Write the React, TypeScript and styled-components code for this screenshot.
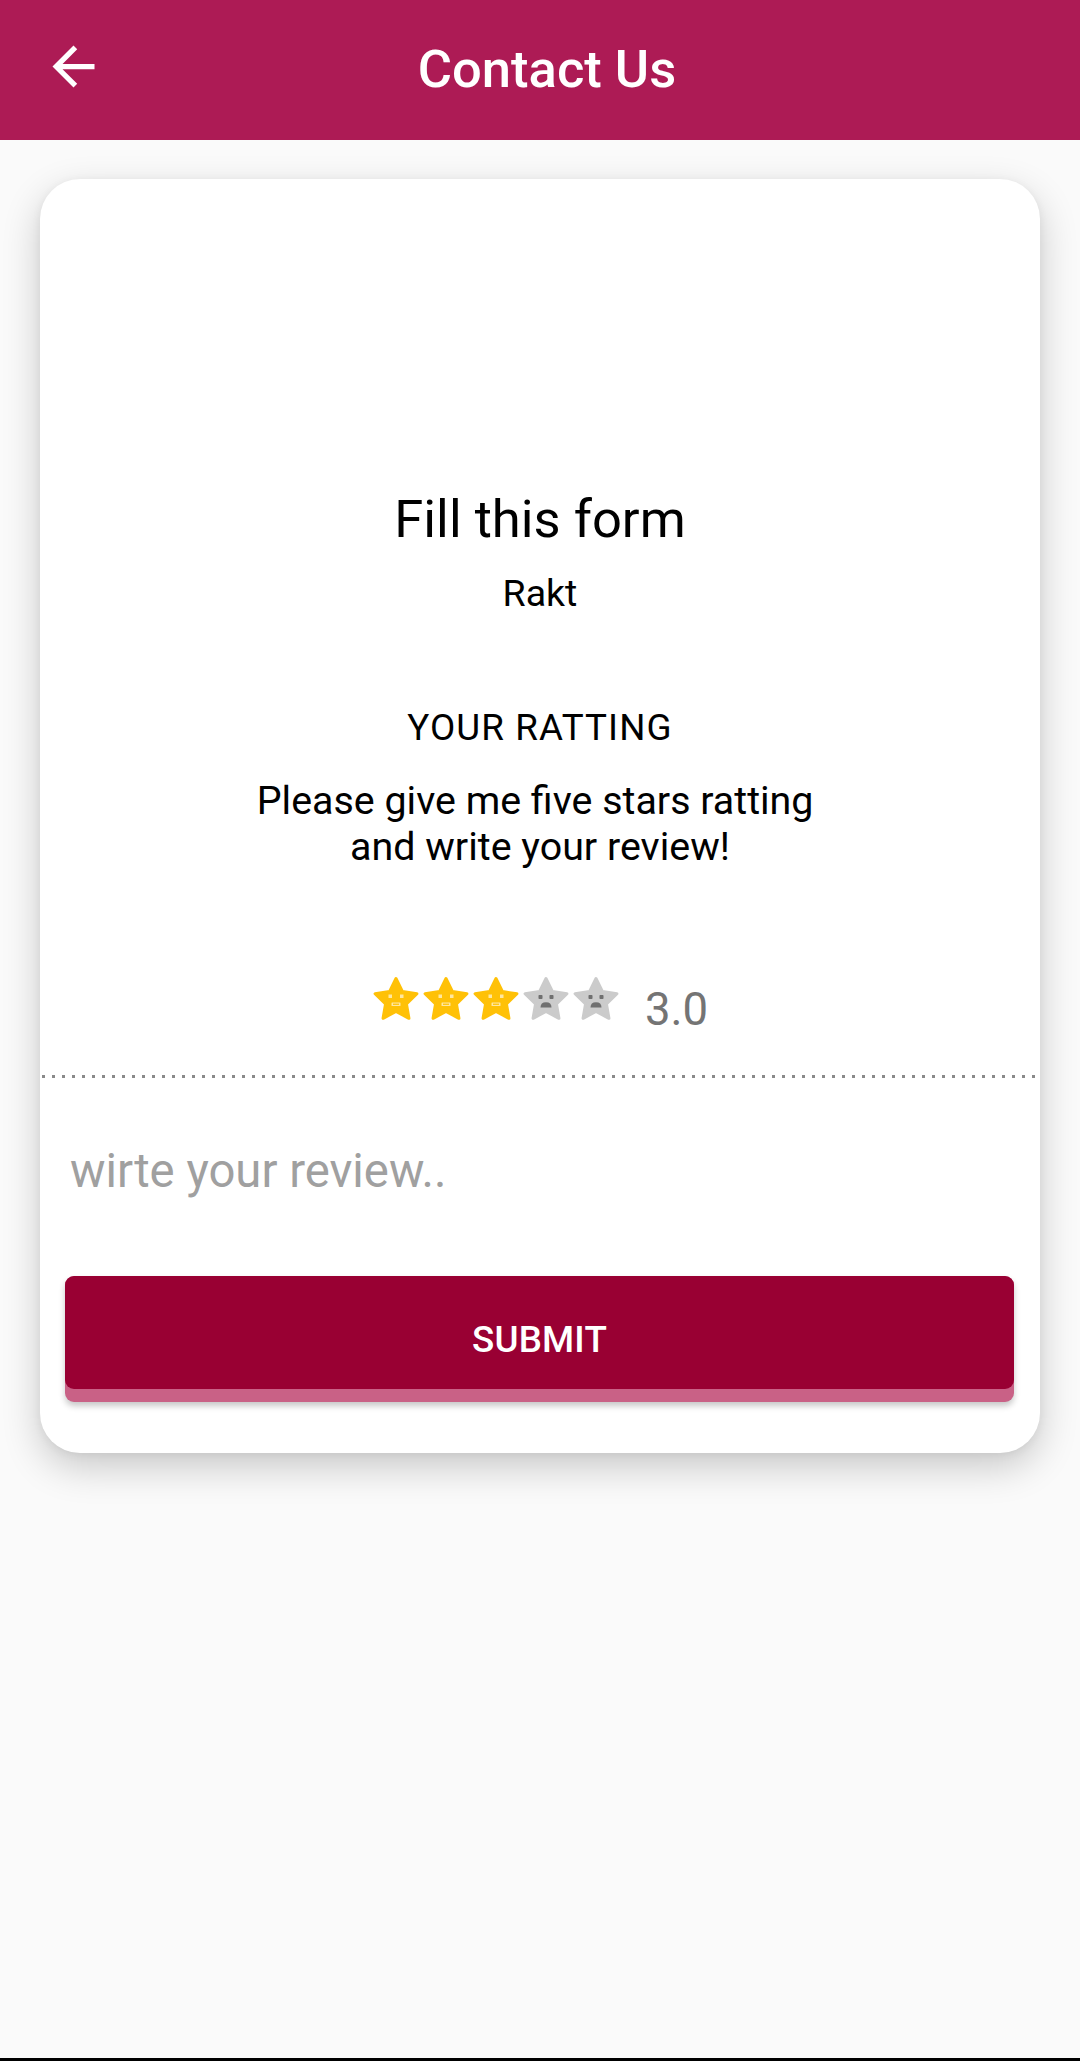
import React from "react";
import styled, { createGlobalStyle } from "styled-components";

const GlobalStyle = createGlobalStyle`
  html, body {
    margin: 0;
    padding: 0;
    background: #fafafa;
  }
  body {
    font-family: Roboto, "Noto Sans", "Liberation Sans", sans-serif;
    -webkit-font-smoothing: antialiased;
  }
  * { box-sizing: border-box; }
`;

const Page = styled.div`
  display: flex;
  flex-direction: column;
  height: 2061px;
  background: #fafafa;
  border-bottom: 3px solid #000;
`;

const AppBar = styled.header`
  display: flex;
  align-items: center;
  height: 140px;
  flex-shrink: 0;
  background: #ad1b55;
  padding-left: 42px;
`;

const BackButton = styled.button`
  display: flex;
  align-items: center;
  justify-content: center;
  width: 63px;
  height: 63px;
  padding: 0;
  margin-bottom: 8px;
  border: none;
  background: transparent;
  color: #fff;
  cursor: pointer;
`;

const Title = styled.h1`
  flex: 1;
  margin: 0;
  padding-right: 91px;
  text-align: center;
  color: #fff;
  font-size: 52.5px;
  font-weight: 500;
  line-height: 1.172;
`;

const Card = styled.section`
  display: flex;
  flex-direction: column;
  align-items: center;
  margin: 39px 40px 0;
  height: 1274px;
  padding-top: 310px;
  background: #fff;
  border-radius: 40px;
  box-shadow: 0 14px 38px rgba(0, 0, 0, 0.2), 0 2px 10px rgba(0, 0, 0, 0.06);
`;

const Heading = styled.h2`
  margin: 0;
  font-size: 52.5px;
  font-weight: 400;
  line-height: 1.172;
  color: #000;
`;

const Text = styled.p<{ $size: number; $top: number; $spacing?: number }>`
  margin: ${(p) => p.$top}px 0 0;
  font-size: ${(p) => p.$size}px;
  font-weight: 400;
  line-height: 1.172;
  letter-spacing: ${(p) => p.$spacing ?? 0}px;
  color: #000;
  text-align: center;
`;

const RatingRow = styled.div`
  display: flex;
  align-items: flex-start;
  margin-top: 106px;
`;

const Stars = styled.div`
  display: flex;
  gap: 2px;
`;

const StarSvg = styled.svg`
  width: 48px;
  height: 46px;
  display: block;
`;

const RatingValue = styled.span`
  margin: 7px 0 0 25px;
  font-size: 45.5px;
  line-height: 1.172;
  color: #747474;
`;

const Divider = styled.div`
  align-self: stretch;
  height: 3px;
  margin-top: 39px;
  background-image: linear-gradient(to right, #8a8a8a 3px, transparent 3px);
  background-size: 10px 3px;
  background-position: 2px 0;
  background-repeat: repeat-x;
`;

const ReviewInput = styled.input`
  align-self: stretch;
  margin: 65px 30px 0 30px;
  height: 55px;
  padding: 0;
  border: none;
  outline: none;
  background: transparent;
  font-family: Roboto, "Noto Sans", sans-serif;
  font-size: 47.25px;
  color: #000;
  &::placeholder {
    color: #a0a0a0;
  }
`;

const SubmitButton = styled.button`
  position: relative;
  align-self: stretch;
  margin: 78px 26px 0 25px;
  height: 126px;
  border: none;
  border-radius: 9px;
  background: #c96186;
  box-shadow: 0 4px 6px rgba(0, 0, 0, 0.22);
  cursor: pointer;
  &::before {
    content: "";
    position: absolute;
    left: 0;
    right: 0;
    top: 0;
    bottom: 13px;
    border-radius: 9px;
    background: #990033;
  }
`;

const SubmitLabel = styled.span`
  position: relative;
  font-family: Roboto, "Noto Sans", sans-serif;
  font-size: 36.75px;
  font-weight: 500;
  color: #fff;
  letter-spacing: 0.2px;
`;

const STAR_POINTS =
  "24,2.5 30.47,15.6 44.92,17.7 34.46,27.9 36.94,42.3 24,35.5 11.06,42.3 13.54,27.9 3.08,17.7 17.53,15.6";

function Star({ filled }: { filled: boolean }) {
  const body = filled ? "#ffc107" : "#cbcbcb";
  return (
    <StarSvg viewBox="0 0 48 46">
      <polygon
        points={STAR_POINTS}
        fill={body}
        stroke={body}
        strokeWidth={3}
        strokeLinejoin="round"
      />
      {filled ? (
        <g fill="#ffe7a0">
          <rect x="16.5" y="18.5" width="3.5" height="3.5" />
          <rect x="28" y="18.5" width="3.5" height="3.5" />
          <rect x="19.5" y="26.5" width="9" height="3.5" rx="0.6" />
          <rect x="21" y="27.6" width="6" height="1.3" fill="#ffc107" />
        </g>
      ) : (
        <g fill="#6f6f6f">
          <rect x="16.5" y="19" width="4" height="4" rx="0.8" />
          <rect x="27.5" y="19" width="4" height="4" rx="0.8" />
          <path d="M18.5 31.5 Q18.5 26.2 24 26.2 Q29.5 26.2 29.5 31.5 Z" />
        </g>
      )}
    </StarSvg>
  );
}

function BackArrow() {
  return (
    <svg width="63" height="63" viewBox="0 0 24 24" fill="currentColor">
      <path d="M20 11H7.83l5.59-5.59L12 4l-8 8 8 8 1.41-1.41L7.83 13H20v-2z" />
    </svg>
  );
}

export default function App() {
  const rating = 3;
  return (
    <>
      <GlobalStyle />
      <Page>
        <AppBar>
          <BackButton aria-label="Back">
            <BackArrow />
          </BackButton>
          <Title>Contact Us</Title>
        </AppBar>
        <Card>
          <Heading>Fill this form</Heading>
          <Text $size={37.5} $top={21}>
            Rakt
          </Text>
          <Text $size={36.75} $top={91} $spacing={1.1}>
            YOUR RATTING
          </Text>
          <Text $size={39.4} $top={28}>
            {"Please give me five stars ratting\u00A0"}
            <br />
            and write your review!
          </Text>
          <RatingRow>
            <Stars>
              {[1, 2, 3, 4, 5].map((i) => (
                <Star key={i} filled={i <= rating} />
              ))}
            </Stars>
            <RatingValue>{rating.toFixed(1)}</RatingValue>
          </RatingRow>
          <Divider />
          <ReviewInput placeholder="wirte your review.." />
          <SubmitButton>
            <SubmitLabel>SUBMIT</SubmitLabel>
          </SubmitButton>
        </Card>
      </Page>
    </>
  );
}
